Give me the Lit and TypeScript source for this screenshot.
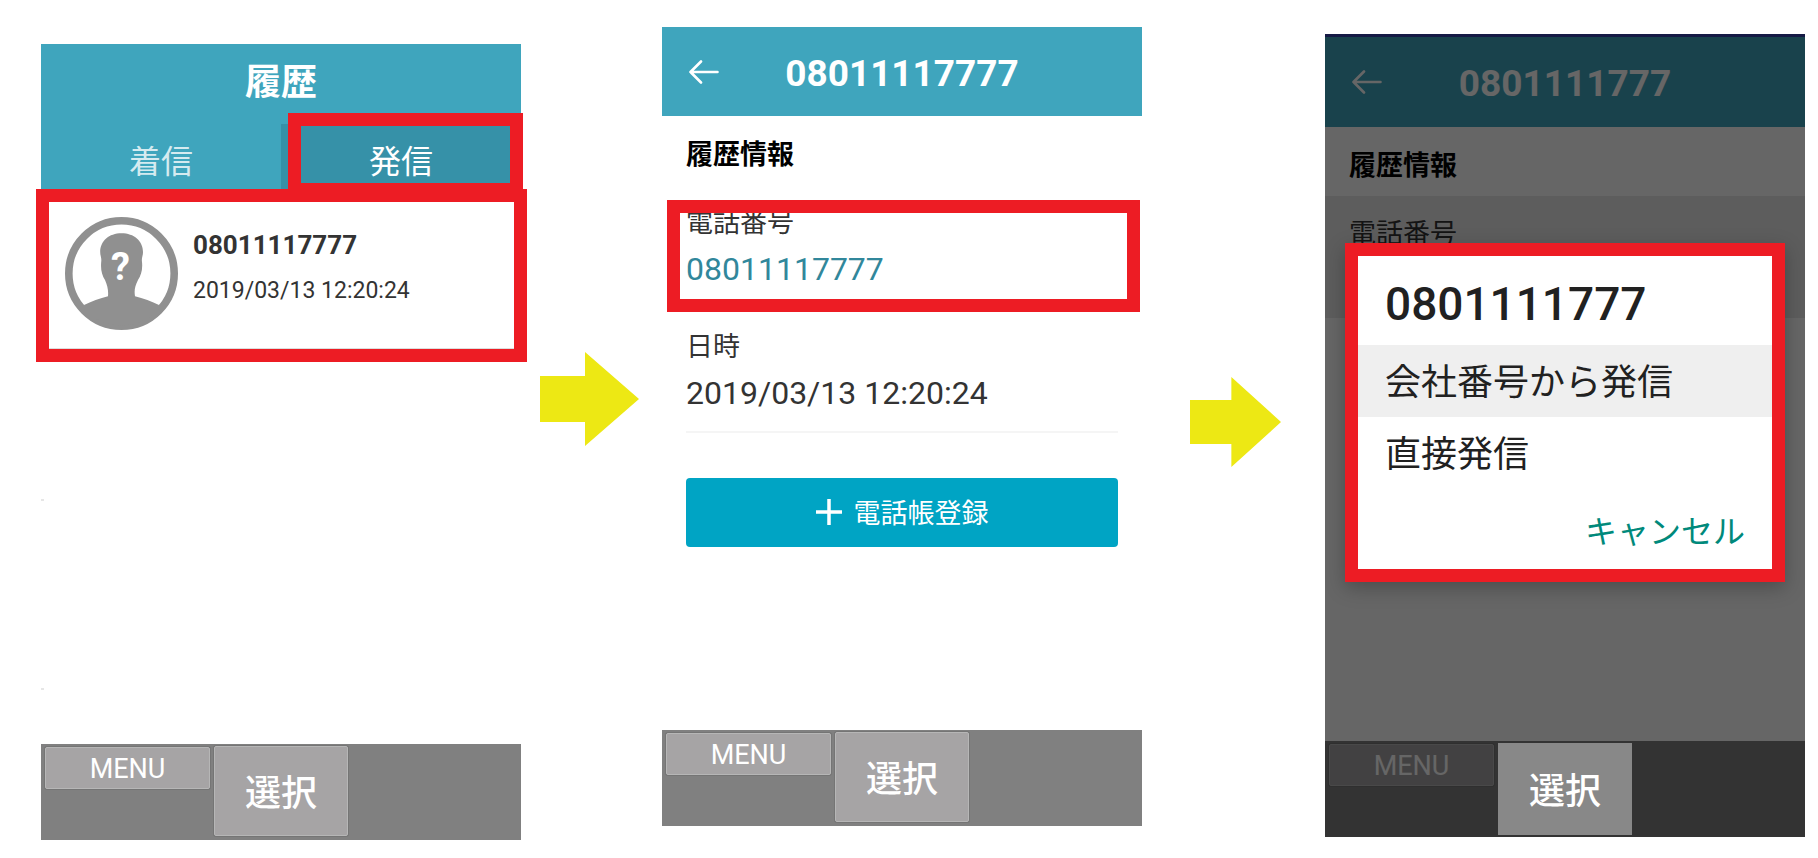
import { LitElement, html, css, svg } from "lit";
import { customElement, property } from "lit/decorators.js";

const base = css`
  * {
    box-sizing: border-box;
  }
  :host {
    font-family: Roboto, "Noto Sans CJK JP", sans-serif;
    color: #333;
  }
  button {
    font: inherit;
    color: inherit;
    border: 0;
    margin: 0;
    padding: 0;
    background: none;
    cursor: pointer;
  }
  h1,
  h2,
  p,
  dl,
  dd {
    margin: 0;
  }
  .mark {
    position: absolute;
    border: 13px solid #ed1c24;
    pointer-events: none;
  }
`;

@customElement("flow-arrow")
export class FlowArrow extends LitElement {
  static styles = css`
    :host {
      display: block;
    }
    svg {
      display: block;
      width: 100%;
      height: 100%;
      fill: #ede814;
    }
  `;
  render() {
    return html`<svg viewBox="0 0 99 94" preserveAspectRatio="none" aria-hidden="true">
      <path d="M0 24H45V0L99 47L45 94V70H0Z" />
    </svg>`;
  }
}

@customElement("key-bar")
export class KeyBar extends LitElement {
  @property({ type: Boolean, reflect: true }) lit = false;

  static styles = [
    base,
    css`
      :host {
        display: block;
        color: #fff;
      }
      .bar {
        display: flex;
        align-items: flex-start;
        gap: 4px;
        height: 96px;
        padding: 2px 4px;
        background: #808080;
      }
      .key {
        background: #a6a4a5;
        border: 1px solid #b6b6b6;
        border-radius: 2px;
        box-shadow: 0 0 0 1px #757575;
      }
      .menu {
        width: 165px;
        height: 42px;
        margin-top: 1px;
        padding-top: 2px;
        font-size: 27px;
        line-height: 38px;
      }
      .select {
        width: 134px;
        height: 90px;
        padding-bottom: 3px;
        font-size: 36px;
        font-weight: 500;
      }
      :host([lit]) .select {
        position: relative;
        z-index: 2;
        height: 92px;
        background: #888;
        border: 0;
        border-radius: 0;
        box-shadow: none;
      }
    `,
  ];
  render() {
    return html`<nav class="bar">
      <button class="key menu">MENU</button>
      <button class="key select">選択</button>
    </nav>`;
  }
}

@customElement("title-bar")
export class TitleBar extends LitElement {
  @property() heading = "";

  static styles = [
    base,
    css`
      :host {
        display: block;
      }
      .bar {
        display: grid;
        grid-template-columns: 84px 1fr 84px;
        align-items: center;
        height: 89px;
        color: #fff;
        background: #3fa5bd;
      }
      .back {
        justify-self: start;
        margin-left: 27px;
        height: 24px;
      }
      .back svg {
        display: block;
        width: 30px;
        height: 24px;
        fill: none;
        stroke: #fff;
        stroke-width: 2.6;
        stroke-linecap: round;
        stroke-linejoin: round;
      }
      .title {
        font-size: 37px;
        line-height: 48px;
        padding-top: 4px;
        text-align: center;
      }
    `,
  ];
  render() {
    return html`<header class="bar">
      <button class="back" aria-label="戻る">
        <svg viewBox="0 0 30 24"><path d="M12 1.5L1.5 12L12 22.5M1.5 12H28.5" /></svg>
      </button>
      <h1 class="title">${this.heading}</h1>
    </header>`;
  }
}

@customElement("history-screen")
export class HistoryScreen extends LitElement {
  static styles = [
    base,
    css`
      :host {
        display: flex;
        flex-direction: column;
      }
      .head {
        background: #3fa5bd;
        color: #fff;
      }
      .title {
        height: 80px;
        font-size: 36px;
        line-height: 78px;
        text-align: center;
      }
      .tabs {
        display: grid;
        grid-template-columns: 1fr 1fr;
      }
      .tab {
        position: relative;
        height: 65px;
        padding-top: 12px;
        font-size: 32px;
        line-height: 53px;
        color: rgba(255, 255, 255, 0.8);
      }
      .tab.on {
        color: #fff;
        background: #3691a8;
      }
      .tab .mark {
        inset: -11px -2px -7px 7px;
      }
      .list {
        flex: 1;
      }
      .item {
        position: relative;
        display: flex;
        gap: 15px;
        height: 160px;
        padding: 28px 24px 0;
        border-bottom: 1px solid #ddd;
      }
      .item .mark {
        inset: 0 -6px -14px -5px;
      }
      .empty {
        width: 3px;
        height: 152px;
        border-bottom: 2px solid #e6e6e6;
      }
      .empty + .empty {
        height: 189px;
      }
      .avatar {
        flex: none;
        width: 113px;
        height: 113px;
      }
      .avatar text {
        font: 700 38px Roboto, sans-serif;
      }
      .who {
        padding-top: 8px;
        font-size: 26px;
        font-weight: 700;
        line-height: 40px;
      }
      .when {
        font-size: 23px;
        line-height: 52px;
      }
    `,
  ];
  render() {
    const avatar = svg`
      <circle cx="56.5" cy="56.5" r="52.7" fill="none" stroke="#909090" stroke-width="7.6" />
      <path fill="#909090" d="M56.5 16.3C44 16.3 35.2 24 35.2 35C35.2 39 36.8 41 36.2 45C35.5 53 37 58 40 63C42.5 69 43.5 73 43 79.3C35 81.5 26 84.5 19 88L20 93A51 51 0 0 0 93 93L94 88C87 84.5 78 81.5 70 79.3C69 73 70 69 73 63C76 58 77.8 53 77 45C76.4 41 78 39 78 35C78 24 69 16.3 56.5 16.3Z" />
      <text x="55.5" y="63" text-anchor="middle" fill="#fff">?</text>`;
    return html`
      <header class="head">
        <h1 class="title">履歴</h1>
        <div class="tabs" role="tablist">
          <button class="tab" role="tab" aria-selected="false">着信</button>
          <button class="tab on" role="tab" aria-selected="true">発信<span class="mark"></span></button>
        </div>
      </header>
      <main class="list">
        <article class="item">
          <svg class="avatar" viewBox="0 0 113 113" aria-hidden="true">${avatar}</svg>
          <div>
            <p class="who">08011117777</p>
            <p class="when"><time>2019/03/13 12:20:24</time></p>
          </div>
          <span class="mark"></span>
        </article>
        <div class="empty"></div>
        <div class="empty"></div>
      </main>
      <key-bar></key-bar>
    `;
  }
}

const detailStyles = css`
  :host {
    display: flex;
    flex-direction: column;
  }
  .body {
    flex: 1;
  }
  .section {
    height: 69px;
    padding: 8px 24px 0;
    font-size: 27px;
    line-height: 63px;
    color: #000;
  }
  .field {
    position: relative;
    height: 124px;
    padding: 19px 24px 0;
  }
  .label {
    font-size: 27px;
    line-height: 38px;
  }
  .value {
    height: 67px;
    font-size: 32px;
    line-height: 54px;
    border-bottom: 2px solid #f5f5f5;
  }
  .tel {
    color: #31879b;
    text-decoration: none;
  }
`;

@customElement("detail-screen")
export class DetailScreen extends LitElement {
  static styles = [
    base,
    detailStyles,
    css`
      .field .mark {
        inset: 15px 2px -3px 5px;
      }
      .actions {
        padding: 45px 24px 0;
      }
      .add {
        display: flex;
        align-items: center;
        justify-content: center;
        gap: 12px;
        width: 100%;
        height: 69px;
        padding-bottom: 2px;
        font-size: 27px;
        color: #fff;
        background: #00a4c4;
        border-radius: 4px;
      }
      .add svg {
        width: 26px;
        height: 26px;
        stroke: #fff;
        stroke-width: 3.5;
      }
    `,
  ];
  render() {
    return html`
      <title-bar heading="08011117777"></title-bar>
      <main class="body">
        <h2 class="section">履歴情報</h2>
        <dl>
          <div class="field">
            <dt class="label">電話番号</dt>
            <dd class="value"><a class="tel" href="tel:08011117777">08011117777</a></dd>
            <span class="mark"></span>
          </div>
          <div class="field">
            <dt class="label">日時</dt>
            <dd class="value"><time>2019/03/13 12:20:24</time></dd>
          </div>
        </dl>
        <div class="actions">
          <button class="add">
            <svg viewBox="0 0 26 26" aria-hidden="true"><path d="M13 0V26M0 13H26" /></svg>
            電話帳登録
          </button>
        </div>
      </main>
      <key-bar></key-bar>
    `;
  }
}

@customElement("dialog-screen")
export class DialogScreen extends LitElement {
  static styles = [
    base,
    detailStyles,
    css`
      :host {
        position: relative;
        border-top: 3px solid #161a45;
      }
      .body {
        border-top: 1px solid #3fa5bd;
      }
      .field.pressed {
        height: 122px;
        background: #e9e9e9;
      }
      .shade {
        position: absolute;
        inset: 0;
        z-index: 1;
        padding: 206px 20px 0;
        background: rgba(0, 0, 0, 0.6);
      }
      .dialog {
        display: flex;
        flex-direction: column;
        background: #fff;
        color: #212121;
        border: 13px solid #ed1c24;
        box-shadow: 0 6px 18px rgba(0, 0, 0, 0.25);
      }
      .number {
        height: 89px;
        padding: 0 27px;
        font-size: 46px;
        font-weight: 500;
        line-height: 96px;
      }
      .option {
        height: 72px;
        padding: 4px 27px 0;
        font-size: 36px;
        line-height: 68px;
        text-align: left;
      }
      .option.active {
        background: #efefef;
      }
      .cancel {
        align-self: flex-end;
        height: 80px;
        padding: 6px 27px 0;
        font-size: 32px;
        line-height: 74px;
        color: #00897b;
      }
    `,
  ];
  render() {
    return html`
      <title-bar heading="0801111777"></title-bar>
      <main class="body">
        <h2 class="section">履歴情報</h2>
        <dl>
          <div class="field pressed">
            <dt class="label">電話番号</dt>
          </div>
        </dl>
      </main>
      <key-bar lit></key-bar>
      <div class="shade">
        <section class="dialog" role="dialog" aria-labelledby="number">
          <h2 class="number" id="number">0801111777</h2>
          <button class="option active">会社番号から発信</button>
          <button class="option">直接発信</button>
          <button class="cancel">キャンセル</button>
        </section>
      </div>
    `;
  }
}

@customElement("app-root")
export class AppRoot extends LitElement {
  static styles = css`
    :host {
      display: grid;
      grid-template-columns: 480fr 141fr 480fr 183fr 480fr;
      box-sizing: border-box;
      min-height: 100vh;
      padding: 0 13px 0 41px;
      background: #fff;
    }
    .history {
      margin: 44px 0 18px;
    }
    .detail {
      margin: 27px 0 32px;
    }
    .confirm {
      margin: 34px 0 21px;
    }
    .first {
      width: 99px;
      height: 94px;
      margin: 352px 0 0 19px;
    }
    .second {
      width: 91px;
      height: 90px;
      margin: 377px 0 0 48px;
    }
  `;
  render() {
    return html`
      <history-screen class="history"></history-screen>
      <flow-arrow class="first"></flow-arrow>
      <detail-screen class="detail"></detail-screen>
      <flow-arrow class="second"></flow-arrow>
      <dialog-screen class="confirm"></dialog-screen>
    `;
  }
}
